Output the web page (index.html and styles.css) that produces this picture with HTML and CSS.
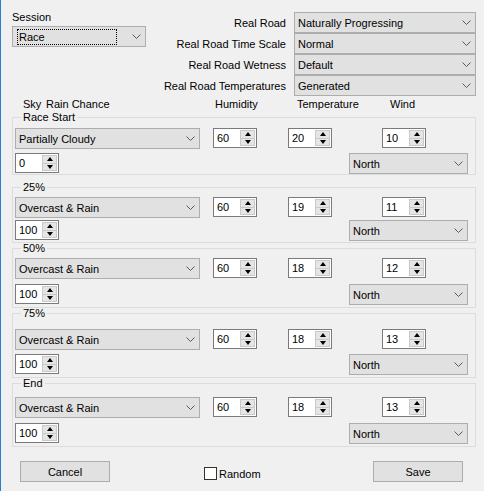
FILE: index.html
```html
<!DOCTYPE html>
<html lang="en">
<head>
    <meta charset="UTF-8">
    <meta name="viewport" content="width=device-width, initial-scale=1.0">
    <title>Weather</title>
    <link rel="stylesheet" href="styles.css">
</head>
<body>
    <div class="window">
        <div class="top">
            <div class="session">
                <div class="session-label">Session</div>
                <div class="combo session-combo">
                    <span class="focus-box">Race</span>
                    <svg class="chev" width="9" height="5" viewBox="0 0 9 5"><polyline points="0.5,0.5 4.5,4.5 8.5,0.5" fill="none" stroke="#5a5a5a"/></svg>
                </div>
            </div>
            <div class="road">
                <span class="road-label">Real Road</span>
                <div class="combo road-combo"><span class="combo-text">Naturally Progressing</span><svg class="chev" width="9" height="5" viewBox="0 0 9 5"><polyline points="0.5,0.5 4.5,4.5 8.5,0.5" fill="none" stroke="#5a5a5a"/></svg></div>
                <span class="road-label">Real Road Time Scale</span>
                <div class="combo road-combo"><span class="combo-text">Normal</span><svg class="chev" width="9" height="5" viewBox="0 0 9 5"><polyline points="0.5,0.5 4.5,4.5 8.5,0.5" fill="none" stroke="#5a5a5a"/></svg></div>
                <span class="road-label">Real Road Wetness</span>
                <div class="combo road-combo"><span class="combo-text">Default</span><svg class="chev" width="9" height="5" viewBox="0 0 9 5"><polyline points="0.5,0.5 4.5,4.5 8.5,0.5" fill="none" stroke="#5a5a5a"/></svg></div>
                <span class="road-label">Real Road Temperatures</span>
                <div class="combo road-combo"><span class="combo-text">Generated</span><svg class="chev" width="9" height="5" viewBox="0 0 9 5"><polyline points="0.5,0.5 4.5,4.5 8.5,0.5" fill="none" stroke="#5a5a5a"/></svg></div>
            </div>
        </div>

        <div class="headers">
            <span>Sky</span>
            <span>Rain Chance</span>
            <span>Humidity</span>
            <span>Temperature</span>
            <span>Wind</span>
        </div>

        <div id="groups"></div>

        <div class="bottom-bar">
            <button class="btn btn-cancel">Cancel</button>
            <label class="random"><span class="check"></span>Random</label>
            <button class="btn btn-save">Save</button>
        </div>
    </div>

    <script>
        // weather slots, one group box each
        var slots = [
            { name: 'Race Start', sky: 'Partially Cloudy', rain: 0, hum: 60, temp: 20, wind: 10, dir: 'North' },
            { name: '25%', sky: 'Overcast & Rain', rain: 100, hum: 60, temp: 19, wind: 11, dir: 'North' },
            { name: '50%', sky: 'Overcast & Rain', rain: 100, hum: 60, temp: 18, wind: 12, dir: 'North' },
            { name: '75%', sky: 'Overcast & Rain', rain: 100, hum: 60, temp: 18, wind: 13, dir: 'North' },
            { name: 'End', sky: 'Overcast & Rain', rain: 100, hum: 60, temp: 18, wind: 13, dir: 'North' }
        ];

        var chev = '<svg class="chev" width="9" height="5" viewBox="0 0 9 5"><polyline points="0.5,0.5 4.5,4.5 8.5,0.5" fill="none" stroke="#5a5a5a"/></svg>';

        function spin(cls, value) {
            return '<div class="spin ' + cls + '"><span class="spin-val">' + value + '</span>' +
                '<span class="arrows"><span class="arrow up"></span><span class="arrow down"></span></span></div>';
        }

        var html = '';
        slots.forEach(function(s, i) {
            html += '<fieldset class="group group-' + i + '"><legend>' + s.name + '</legend>' +
                '<div class="row">' +
                    '<div class="combo sky-combo"><span class="combo-text">' + s.sky.replace('&', '&amp;') + '</span>' + chev + '</div>' +
                    spin('spin-hum', s.hum) + spin('spin-temp', s.temp) + spin('spin-wind', s.wind) +
                '</div>' +
                '<div class="row row-2">' +
                    spin('spin-rain', s.rain) +
                    '<div class="combo dir-combo"><span class="combo-text">' + s.dir + '</span>' + chev + '</div>' +
                '</div>' +
            '</fieldset>';
        });
        document.getElementById('groups').innerHTML = html;
    </script>
</body>
</html>
```

FILE: styles.css
```css
* {
    box-sizing: border-box;
}

body {
    margin: 0;
    padding: 0;
    background-color: #f0f0f0;
    font-family: "Liberation Sans", Arial, sans-serif;
    font-size: 11px;
    color: #000000;
}

.window {
    width: 484px;
    height: 491px;
    border-left: 1px solid #2b7bd1; /* window edge */
    background-color: #f0f0f0;
    overflow: hidden;
}

/* top area */
.top {
    display: flex;
    padding-top: 12px;
}

.session {
    margin-left: 11px;
    width: 134px;
}

.session-label {
    height: 14px;
    line-height: 13px;
    margin-top: -1px;
}

.session-combo {
    margin-top: 1px;
    width: 134px;
}

.focus-box {
    flex: 1;
    margin: 1px 15px 1px 1px;
    padding-left: 1px;
    line-height: 14px;
    border: 1px dotted #000000;
}

.road {
    margin-left: auto;
    margin-right: 8px;
    display: grid;
    grid-template-columns: auto 182px;
    grid-auto-rows: 21px;
    column-gap: 8px;
    align-items: center;
}

.road-label {
    text-align: right;
}

/* combo box */
.combo {
    height: 21px;
    display: flex;
    align-items: center;
    background-color: #e1e1e1;
    border: 1px solid #adadad;
    padding-left: 3px;
    padding-right: 4px;
}

.combo-text {
    flex: 1;
    white-space: nowrap;
}

.chev {
    display: block;
    margin-left: auto;
}

/* column headers */
.headers {
    display: grid;
    grid-template-columns: 23px 169px 82px 93px auto;
    padding-left: 22px;
    height: 13px;
    line-height: 13px;
    margin-top: 2px;
    white-space: nowrap;
}

/* group boxes */
.group {
    margin: 0 8px 0 11px;
    padding: 4px 0 0 2px;
    border: 1px solid #dcdcdc;
    height: 64px;
}

.group legend {
    margin-left: 6px;
    padding: 0 2px;
    line-height: 13px;
}

.row {
    display: flex;
    align-items: flex-start;
}

.row-2 {
    margin-top: 4px;
}

.group-1 {
    margin-top: 6px;
    height: 62px;
    padding-top: 3px;
}

.group-1 .row-2 {
    margin-top: 2px;
}

.group-2 {
    margin-top: -1px;
    height: 66px;
    padding-top: 3px;
}

.group-2 .row-2 {
    margin-top: 5px;
}

.group-3 {
    margin-top: -1px;
    height: 71px;
    padding-top: 9px;
}

.group-4 {
    margin-top: -1px;
    height: 70px;
    padding-top: 7px;
}

.group-4 .row-2 {
    margin-top: 5px;
}

.sky-combo {
    width: 185px;
}

.dir-combo {
    width: 119px;
    margin-left: 290px;
}

/* numeric up down */
.spin {
    height: 20px;
    width: 44px;
    display: flex;
    background-color: #ffffff;
    border: 1px solid #7a7a7a;
}

.spin-val {
    flex: 1;
    padding-left: 3px;
    line-height: 18px;
}

.arrows {
    width: 15px;
    margin: 1px;
    display: flex;
    flex-direction: column;
    background-color: #e5e5e5;
    border: 1px solid #c9c9c9;
}

.arrow {
    flex: 1;
    display: flex;
    align-items: center;
    justify-content: center;
}

.arrow.up {
    border-bottom: 1px solid #c9c9c9;
}

.arrow::before {
    content: "";
    width: 0;
    height: 0;
    border-left: 3px solid transparent;
    border-right: 3px solid transparent;
}

.arrow.up::before {
    border-bottom: 4px solid #000000;
}

.arrow.down::before {
    border-top: 4px solid #000000;
}

.spin-hum {
    margin-left: 13px;
}

.spin-temp {
    margin-left: 31px;
}

.spin-wind {
    margin-left: 50px;
}

/* bottom buttons */
.bottom-bar {
    display: flex;
    align-items: flex-start;
    margin-top: 14px;
}

.btn {
    width: 90px;
    height: 21px;
    background-color: #e1e1e1;
    border: 1px solid #adadad;
    font-family: "Liberation Sans", Arial, sans-serif;
    font-size: 11px;
    color: #000000;
    padding: 0;
}

.btn-cancel {
    margin-left: 19px;
}

.btn-save {
    margin-left: auto;
    margin-right: 21px;
}

.random {
    display: flex;
    align-items: center;
    margin-left: 94px;
    margin-top: 6px;
}

.check {
    width: 13px;
    height: 13px;
    background-color: #ffffff;
    border: 1px solid #333333;
    margin-right: 2px;
}
```
